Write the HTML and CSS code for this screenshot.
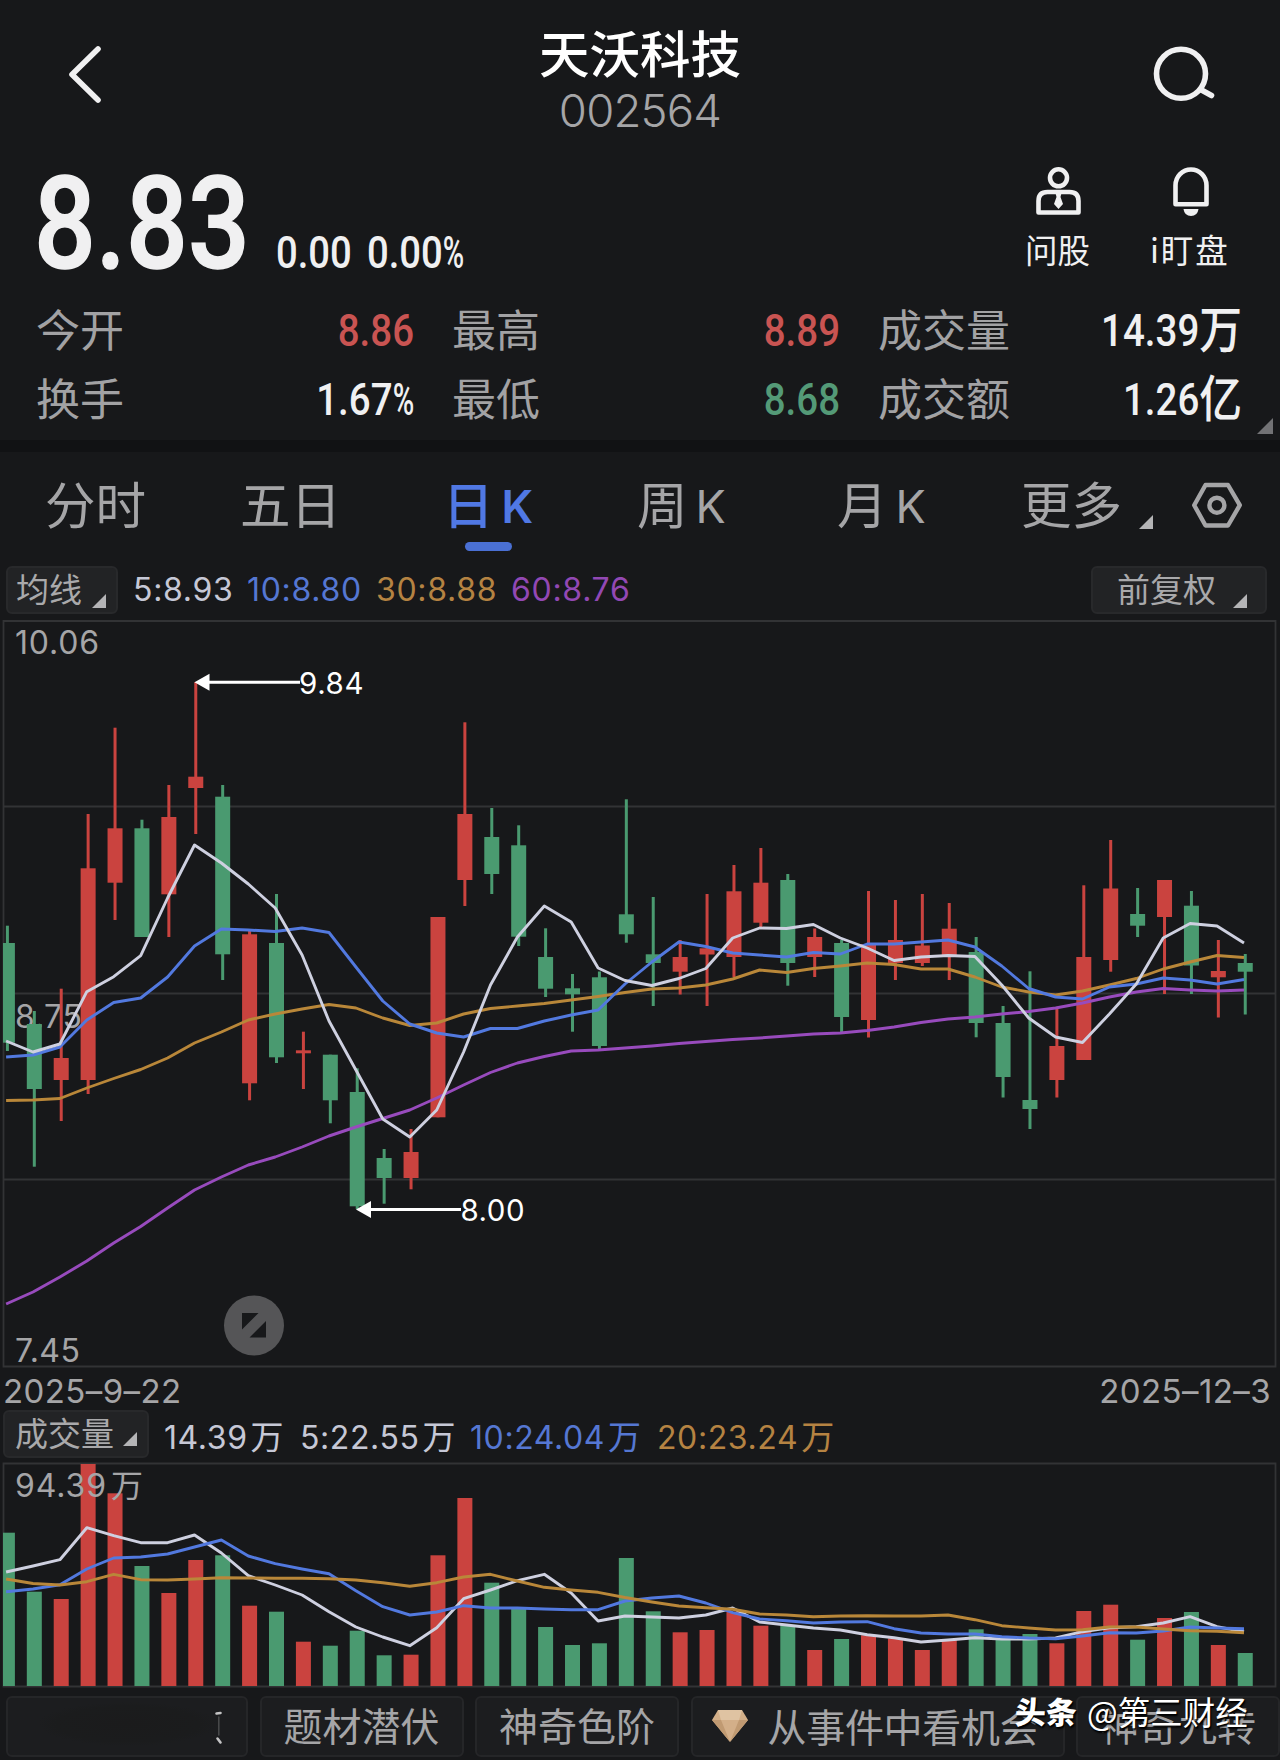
FILE: index.html
```html
<!DOCTYPE html>
<html lang="zh-CN">
<head>
<meta charset="utf-8">
<title>天沃科技 002564</title>
<link rel="stylesheet" href="styles.css">
</head>
<body>
<header class="topbar">
  <svg class="icon-back" width="56" height="70" viewBox="60 40 56 70"><path d="M98 49 72 74.500 98 100" /></svg>
  <div class="heading">
    <h1>天沃科技</h1>
    <div class="code">002564</div>
  </div>
  <svg class="icon-search" width="76" height="70" viewBox="1146 40 76 70"><ellipse cx="1181" cy="73.800" rx="24.500" ry="24.500"/><path d="M1201.500 90 1211.500 95.500"/></svg>
</header>

<section class="quote">
  <div class="price"><span>8.83</span></div>
  <div class="change"><span>0.00</span><span>0.00<i class="pct">%</i></span></div>
  <div class="action">
    <svg width="60" height="54" viewBox="1028 164 60 54"><ellipse cx="1058.500" cy="177.800" rx="8.500" ry="8.500"/><path d="M1038.500 212.500V201q0-9 9-9h22q9 0 9 9v11.500z"/><path class="solid" d="M1055.500 193h6l-1 4 2.500 7-4.500 5-4.500-5 2.500-7z"/></svg>
    <span>问股</span>
  </div>
  <div class="action bell">
    <svg width="60" height="54" viewBox="1162 164 60 54"><path d="M1176.500 204.200V185.500a15.500 16 0 0 1 31 0V204.200z"/><path class="solid" d="M1184.500 209h15q-1 7-7.500 7t-7.500-7z"/></svg>
    <span>i盯盘</span>
  </div>
</section>

<section class="stats">
  <span class="label">今开</span><span class="value up">8.86</span>
  <span class="label">最高</span><span class="value up">8.89</span>
  <span class="label">成交量</span><span class="value">14.39<b>万</b></span>
  <span class="label">换手</span><span class="value">1.67<i class="pct">%</i></span>
  <span class="label">最低</span><span class="value down">8.68</span>
  <span class="label">成交额</span><span class="value">1.26<b>亿</b></span>
  <i class="tri expand"></i>
</section>

<nav class="tabs">
  <a>分时</a><a>五日</a><a class="active">日<em>K</em></a><a>周<em>K</em></a><a>月<em>K</em></a><a>更多</a>
  <i class="tri"></i>
  <svg width="52" height="50" viewBox="1192 480 52 50"><path d="M1206.500 485h22.500l11.800 20.200-11.800 20.300h-22.500l-11.300-20.300z"/><circle cx="1217.900" cy="505.200" r="7.500"/></svg>
</nav>

<section class="legend ma">
  <button class="pick">均线<i class="tri"></i></button>
  <span class="m5">5:8.93</span><span class="m10">10:8.80</span><span class="m30">30:8.88</span><span class="m60">60:8.76</span>
  <button class="pick adjust">前复权<i class="tri"></i></button>
</section>

<svg class="chart" id="kline" width="1280" height="750" viewBox="0 620 1280 750">
  <g class="grid"><path d="M3.500 621H1275.500V1366.500H3.500z"/><path d="M3 806.500H1275M3 993.500H1275M3 1179.500H1275"/></g>
  <g class="axis">
    <text x="15" y="653.500" textLength="84">10.06</text>
    <text x="15" y="1028" textLength="67">8.75</text>
    <text x="15" y="1361.500" textLength="65">7.45</text>
  </g>
  <g id="candles"></g>
  <g class="mark">
    <path class="stem" d="M208 682.300H300M370 1209.500H461"/>
    <path d="M194.500 682.300 209.500 673.800V690.800zM356 1209.500 371 1201V1218z"/>
    <text x="299" y="694" textLength="64.500">9.84</text>
    <text x="460.500" y="1221" textLength="64">8.00</text>
  </g>
  <circle class="zoom" cx="254" cy="1325.500" r="30"/>
  <path class="zoom-mark" d="M242 1313H258.500L242 1329.500zM266 1321V1337.500H249.500z"/>
</svg>

<div class="dates"><span>2025–9–22</span><span>2025–12–3</span></div>

<section class="legend vol">
  <button class="pick">成交量<i class="tri"></i></button>
  <span class="m5">14.39<b>万</b></span><span class="m5">5:22.55<b>万</b></span><span class="m10">10:24.04<b>万</b></span><span class="m30">20:23.24<b>万</b></span>
</section>

<svg class="chart" id="volume" width="1280" height="232" viewBox="0 1460 1280 232">
  <g class="grid"><path d="M3.500 1463.500H1275.500V1686.500H3.500z"/></g>
  <g id="bars"></g>
  <g class="axis"><text x="15" y="1497" textLength="91">94.39</text><text class="cjk" x="111" y="1497">万</text></g>
  <g id="volLines"></g>
</svg>

<footer class="chips">
  <div class="chip worn">
    <svg width="238" height="57" viewBox="8 1698 238 57"><path d="M216.500 1713.500 220.500 1713" /><path d="M217.500 1738.500 220.500 1742.500"/><path class="faint" d="M218.800 1717V1735"/></svg>
  </div>
  <div class="chip">题材潜伏</div>
  <div class="chip">神奇色阶</div>
  <div class="chip gem">
    <svg width="36" height="34" viewBox="0 0 36 34"><path fill="#d3af89" d="M6 1H30L36 11 18 33 0 11z"/><path fill="#dfc3a2" d="M6 1H30L27 11H9z"/><path fill="#c09a72" d="M0 11H9L18 33zM36 11H27L18 33z"/></svg>
    从事件中看机会
  </div>
  <div class="chip">神奇九转</div>
</footer>
<div class="credit"><strong>头条</strong><span>@第三财经</span></div>
<script src="chart.js"></script>
</body>
</html>
```

FILE: styles.css
```css
* { box-sizing: border-box; }
body {
  margin: 0; width: 1280px; height: 1760px; overflow: hidden; position: relative;
  display: flex; flex-direction: column;
  background: #17181a; color: #f0f0f1;
  font-family: Inter, "Noto Sans CJK SC", sans-serif;
}
svg { display: block; flex: none; }

.topbar { height: 140px; flex: none; display: grid; grid-template-columns: 60px 56px 1fr 76px 58px; padding-top: 25px; }
.icon-back, .icon-search { margin-top: 15px; fill: none; stroke: #f0f0f1; stroke-width: 5.6; stroke-linecap: round; stroke-linejoin: round; }
.icon-back { grid-column: 2; }
.heading { text-align: center; padding-left: 18px; }
h1 { margin: -3px 0 0; font: 500 50.500px/58px "Noto Sans CJK SC", sans-serif; color: #fff; }
.code { font-size: 45.500px; font-weight: 300; line-height: 54px; margin-top: 4px; color: #a5a5a7; letter-spacing: -.8px; }

.quote { height: 150px; flex: none; display: grid; grid-template-columns: 240px 767px 104px 1fr; padding-left: 36px; }
.price { font: 500 128px/150px Roboto, sans-serif; padding-top: 9px; margin-left: -2px; }
.price span { display: inline-block; transform: scaleX(.85); transform-origin: 0 50%; -webkit-text-stroke: 1.500px #f0f0f1; }
.change { display: flex; gap: 10px; font: 500 45px/50px Roboto, sans-serif; padding-top: 88px; }
.change span { display: inline-block; transform: scaleX(.85); transform-origin: 0 50%; }
.change span + span { margin-left: -8px; }
.pct { display: inline-block; font-style: normal; transform: scaleX(.76); transform-origin: 0 50%; margin-right: -8px; }
.action { display: flex; flex-direction: column; align-items: center; padding-top: 24px; margin-left: -75px; }
.action.bell { align-items: flex-start; margin-left: 14px; }
.action svg { fill: none; stroke: #f0f0f1; stroke-width: 4.600; stroke-linejoin: round; }
.action .solid { fill: #f0f0f1; stroke: none; }
.action span { font: 400 32.500px/40px "Noto Sans CJK SC", sans-serif; margin-top: 11px; white-space: nowrap; }
.action.bell span { margin-left: -11px; letter-spacing: 1.900px; }

.stats { position: relative; height: 150px; flex: none; display: grid; grid-template-columns: 136px 280px 136px 290px 160px 1fr; grid-template-rows: 69px 69px; align-items: center; padding: 6px 0 5px 36px; }
.label { font: 400 44px/69px "Noto Sans CJK SC", sans-serif; color: #a2a2a4; white-space: nowrap; position: relative; top: -2.500px; }
.value { font: 500 45px/69px Roboto, "Noto Sans CJK SC", sans-serif; text-align: right; padding-right: 38px; transform: scaleX(.855); transform-origin: calc(100% - 38px) 50%; white-space: nowrap; }
.value b { display: inline-block; font: 500 50px/40px "Noto Sans CJK SC", sans-serif; transform: translateY(1.500px); }
.up { color: #c95452; }
.down { color: #549a77; }
.tri { display: block; width: 14px; height: 14px; background: #b4b4b6; clip-path: polygon(100% 0, 100% 100%, 0 100%); }
.expand { position: absolute; right: 7px; bottom: 6px; width: 16px; height: 16px; background: #727275; }

.tabs { height: 121px; flex: none; border-top: 12px solid #111214; position: relative; display: grid; grid-template-columns: 195px 205px 192px 200px 184px 118px 52px 1fr; padding-left: 45px; align-items: start; }
.tabs a { font: 400 50.500px/60px "Noto Sans CJK SC", sans-serif; color: #a5a5a7; padding-top: 20px; white-space: nowrap; }
.tabs em { display: inline-block; font: 400 45px/60px Inter, sans-serif; margin-left: 8px; transform: translateY(-1px); }
.tabs .active { color: #5078e4; font-weight: 500; position: relative; margin-left: -2px; }
.active em { font-weight: 600; }
.active::after { content: ""; position: absolute; left: 22px; top: 90px; width: 47px; height: 9px; border-radius: 5px; background: #4a70d4; }
.tabs .tri { margin-top: 63px; }
.tabs svg { margin-top: 28px; fill: none; stroke: #a5a5a7; stroke-width: 4.400; stroke-linejoin: round; }

.legend { flex: none; display: grid; align-items: start; font-size: 32px; line-height: 40px; white-space: nowrap; }
.ma { height: 59px; grid-template-columns: 127px 114px 129px 135px 580px 176px; padding: 5px 0 0 6px; }
.ma span { margin-top: 3.500px; letter-spacing: .7px; }
.vol { height: 52px; grid-template-columns: 161px 136px 170px 187px 1fr; padding: 2px 0 0 3px; }
.vol span { margin-top: 8px; letter-spacing: .6px; }
.legend b { font: 400 33px/30px "Noto Sans CJK SC", sans-serif; margin-left: 3px; letter-spacing: 0; }
.m5 { color: #c6c8d6; } .m10 { color: #5577d2; } .m30 { color: #b58342; } .m60 { color: #9248b4; }
.pick { display: flex; gap: 12px; width: 112px; height: 48px; border: 2px solid #28292b; border-radius: 6px; background: #222325; color: #a9a9ab; padding: 0 0 0 8px; font: 400 33px/40px "Noto Sans CJK SC", sans-serif; }
.pick .tri { margin-top: 26px; margin-left: -2px; }
.adjust { width: 176px; padding-left: 24px; gap: 19px; }
.vol .pick { width: 146px; padding-left: 10px; gap: 11px; }
.vol .pick .tri { margin-top: 20px; }

.chart { font-family: Inter, sans-serif; }
.grid path { fill: none; stroke: #323335; stroke-width: 1.800; }
.axis text { font-size: 32px; fill: #a5a5a7; }
.axis .cjk { font: 32px "Noto Sans CJK SC", sans-serif; }
.mark { fill: #fff; }
.mark text { font-size: 29.500px; }
.stem { stroke: #fff; stroke-width: 3; }
.zoom { fill: #555557; } .zoom-mark { fill: #17181a; }
.rise { fill: #ca433f; } .fall { fill: #4a9a70; }
.line { fill: none; stroke-width: 2.900; stroke-linejoin: round; }
.s5 { stroke: #ced0e0; } .s10 { stroke: #5279df; } .s30 { stroke: #b98739; } .s60 { stroke: #984bbd; }

.dates { height: 38px; flex: none; display: flex; justify-content: space-between; padding: 1px 9px 0 3px; font-size: 33px; line-height: 40px; color: #a5a5a7; letter-spacing: .4px; }

.chips { display: flex; gap: 11.500px; padding: 4px 0 0 6px; flex: none; }
.chip { width: 204px; height: 61px; flex: none; border: 2px solid #252628; border-radius: 6px; background: #1c1d1f; color: #a5a5a7; font: 400 39px/53px "Noto Sans CJK SC", sans-serif; text-align: center; white-space: nowrap; }
.chip.worn { width: 242px; background: radial-gradient(ellipse 90px 22px at 120px 26px, #1b1b1c, #1b1c1d 80%, #1c1d1f); }
.worn svg { fill: none; stroke: #c4c4c5; stroke-width: 2.600; stroke-linecap: round; }
.worn .faint { stroke: #4a4b4c; stroke-width: 1.500; }
.chip.gem { width: 374px; display: flex; align-items: center; gap: 20px; padding: 0 0 2px 19px; letter-spacing: -.3px; }

.credit { position: absolute; left: 1015px; top: 1690px; display: flex; gap: 10px; color: #fff; font: 400 32.500px/42px "Noto Sans CJK SC", sans-serif; text-shadow: 1px 2px 2px #000, 1px 1px 1px #000; white-space: nowrap; }
.credit strong { font-weight: 900; font-size: 31px; transform: skewX(-2deg); }
```

FILE: chart.js
```js
const STEP = 26.91, FIRST = 7.4, BAR = 15;
const NS = "http://www.w3.org/2000/svg";

// direction, high, body top, body bottom, low, volume top
const days = [
  "G 925.7 943 1042.7 1051 1532.7", "G 1011 1024 1089 1166.7 1591.7", "R 988.7 1058 1080 1121 1599",
  "R 814 868.3 1080 1094 1464", "R 727.7 828.3 882.7 920 1493.3", "G 819.7 828.3 937 937 1566",
  "R 785 817 894.3 937 1593", "R 682 776.7 788 834 1560", "G 785 796.7 954.3 980 1555.3",
  "R 929 934.3 1083.3 1100.3 1605.7", "G 894 943 1057.3 1063 1611.7", "R 1031.7 1050.3 1053.3 1089 1641.7",
  "G 1054.7 1054.7 1100.3 1123.3 1645.7", "G 1068.3 1092 1206.3 1209 1630.7", "G 1149 1158 1178 1203.7 1655.3",
  "R 1129 1152 1178 1189.3 1654.7", "R 917 917 1117.3 1117.3 1555.3", "R 722.3 814 880 906 1498",
  "G 808 837 874 894 1582.7", "G 825.3 845.3 936.7 946 1607", "G 928.3 957 988.7 997 1627",
  "G 974 988.3 994.3 1031.7 1645", "G 971.5 977.3 1046 1051 1643.3", "G 799.3 914.3 934.3 942.7 1558",
  "G 897 954.3 963 1006 1611.3", "R 940 957 971.7 994.5 1632.3", "R 894 948.3 954.5 1006 1630",
  "R 865 891.3 957 977 1611.7", "R 848 882.7 922.7 927 1625.7", "G 874 880 963 985.7 1625",
  "R 928.5 937 957 977 1650", "G 940 943 1017 1032 1639", "R 891 944 1020 1037.5 1635.3",
  "R 900 940 963 980 1638.3", "R 894 945.5 963 966 1650", "R 903 928.7 955 980 1639.3",
  "G 937 952 1023 1037.3 1629.3", "G 1006 1023 1077 1097.5 1640", "G 971.3 1100 1109 1129 1634",
  "R 1008 1046 1080 1097.5 1643.3", "R 885.3 957 1060 1060 1611", "R 840 888.5 960 971.7 1604.7",
  "G 888 914 925.7 937 1639.7", "R 880 880 917 994 1618", "G 891 905.7 965.5 994 1612",
  "R 940 971 977.3 1017.5 1645", "G 954 963 971.7 1014.5 1653"
];

const priceLines = {
  s60: "1304 1292 1277 1261 1243 1226.5 1208 1190 1177 1165 1157 1147 1136 1127 1118.5 1110 1098 1085 1072.5 1063 1056.5 1051 1050 1048 1046 1043.5 1041.5 1039.5 1038 1036 1034 1033 1030.5 1027 1022.5 1019 1017 1014 1011.5 1008 1003 997 992 988.5 990 991 990",
  s30: "1100.5 1100 1098.5 1088 1078.5 1069.5 1058 1043 1032 1020 1014 1009 1004.5 1008 1018 1025.5 1023 1014 1008.5 1006 1003.5 1000 996.5 992.5 989 988 985 979 970 972.5 968.5 966 963 964.5 969 969 977 987 992 995 991 985 978.5 969 962 955.5 957.5",
  s10: "1057 1055 1047 1020 1002.5 998 977 946 929 930 931.5 928 932.5 967 1001 1024 1033 1037 1028.5 1028.5 1021 1015 1010 984 962 942 946.5 953 955 957 952.5 954 944 944 942 940 947 966 988.5 997 999 987 984 978 980 984 979.5",
  s5: "1041 1052 1044 991.7 976.7 955.7 898 845 863 884 908 955 1021 1070 1119 1137 1110 1052 985 937 906 922 968 980.5 985.5 978.5 968.5 938 928 928.5 924.5 938 948 960.5 957 955.5 956.5 985 1018 1037 1042.5 1014 984 938 923.5 926 943"
};

const volumeLines = {
  s5: "1572 1566 1559.7 1527.7 1535.7 1542.7 1542.7 1535 1553 1575.7 1585 1595 1611.7 1627 1637 1645.7 1627.7 1598.7 1590 1580.7 1574.3 1593 1621 1616 1617 1618 1615 1608 1622 1625 1628 1630 1634.7 1637.7 1642 1640 1637.7 1639 1639 1638 1631.7 1627.7 1626.7 1623 1616.7 1626.7 1631.7",
  s10: "1591.7 1589 1584.7 1569 1558 1557 1554 1547 1540 1556 1563.7 1569 1573.7 1590.7 1606.7 1615 1612 1605.7 1608 1608 1609 1609.7 1609.7 1601 1598 1596 1603 1612.7 1619 1620.7 1623 1622 1621.7 1628.7 1633 1634 1634 1636.7 1638 1638.7 1636 1632.7 1633 1631 1627 1628 1628.7",
  s30: "1579 1583.5 1585 1581.7 1574.3 1579.7 1580 1579 1577.7 1578 1578.3 1578.3 1578.7 1580 1582.7 1586.3 1582.7 1577 1574.3 1581 1587.3 1590 1592.3 1597.5 1602 1606 1607.7 1609.3 1614 1615 1616.7 1616 1615.7 1616 1616 1615 1619.7 1625.7 1628 1630 1629.7 1627 1627 1629 1630.7 1631.3 1632.7"
};

function add(parent, tag, attrs) {
  const el = document.createElementNS(NS, tag);
  for (const k in attrs) el.setAttribute(k, attrs[k]);
  parent.appendChild(el);
}

function box(parent, cls, left, right, top, bottom) {
  const x = Math.max(left, 3);
  add(parent, "rect", { class: cls, x: x, y: top, width: right - x, height: bottom - top });
}

function drawLines(parent, lines) {
  for (const cls in lines) {
    const pts = lines[cls].split(" ").map((y, i) => (FIRST - 1.3 + i * STEP).toFixed(1) + "," + y);
    add(parent, "polyline", { class: "line " + cls, points: pts.join(" ") });
  }
}

const candles = document.getElementById("candles");
const bars = document.getElementById("bars");
days.forEach((row, i) => {
  const [dir, ...v] = row.split(" ");
  const [high, top, bottom, low, vol] = v.map(Number);
  const cls = dir === "R" ? "rise" : "fall";
  const c = FIRST + i * STEP;
  box(candles, cls, c - 1.5, c + 1.5, high, low);
  box(candles, cls, c - BAR / 2, c + BAR / 2, top, bottom);
  box(bars, cls, c - BAR / 2, c + BAR / 2, vol, 1686);
});
drawLines(candles, priceLines);
drawLines(document.getElementById("volLines"), volumeLines);
```
